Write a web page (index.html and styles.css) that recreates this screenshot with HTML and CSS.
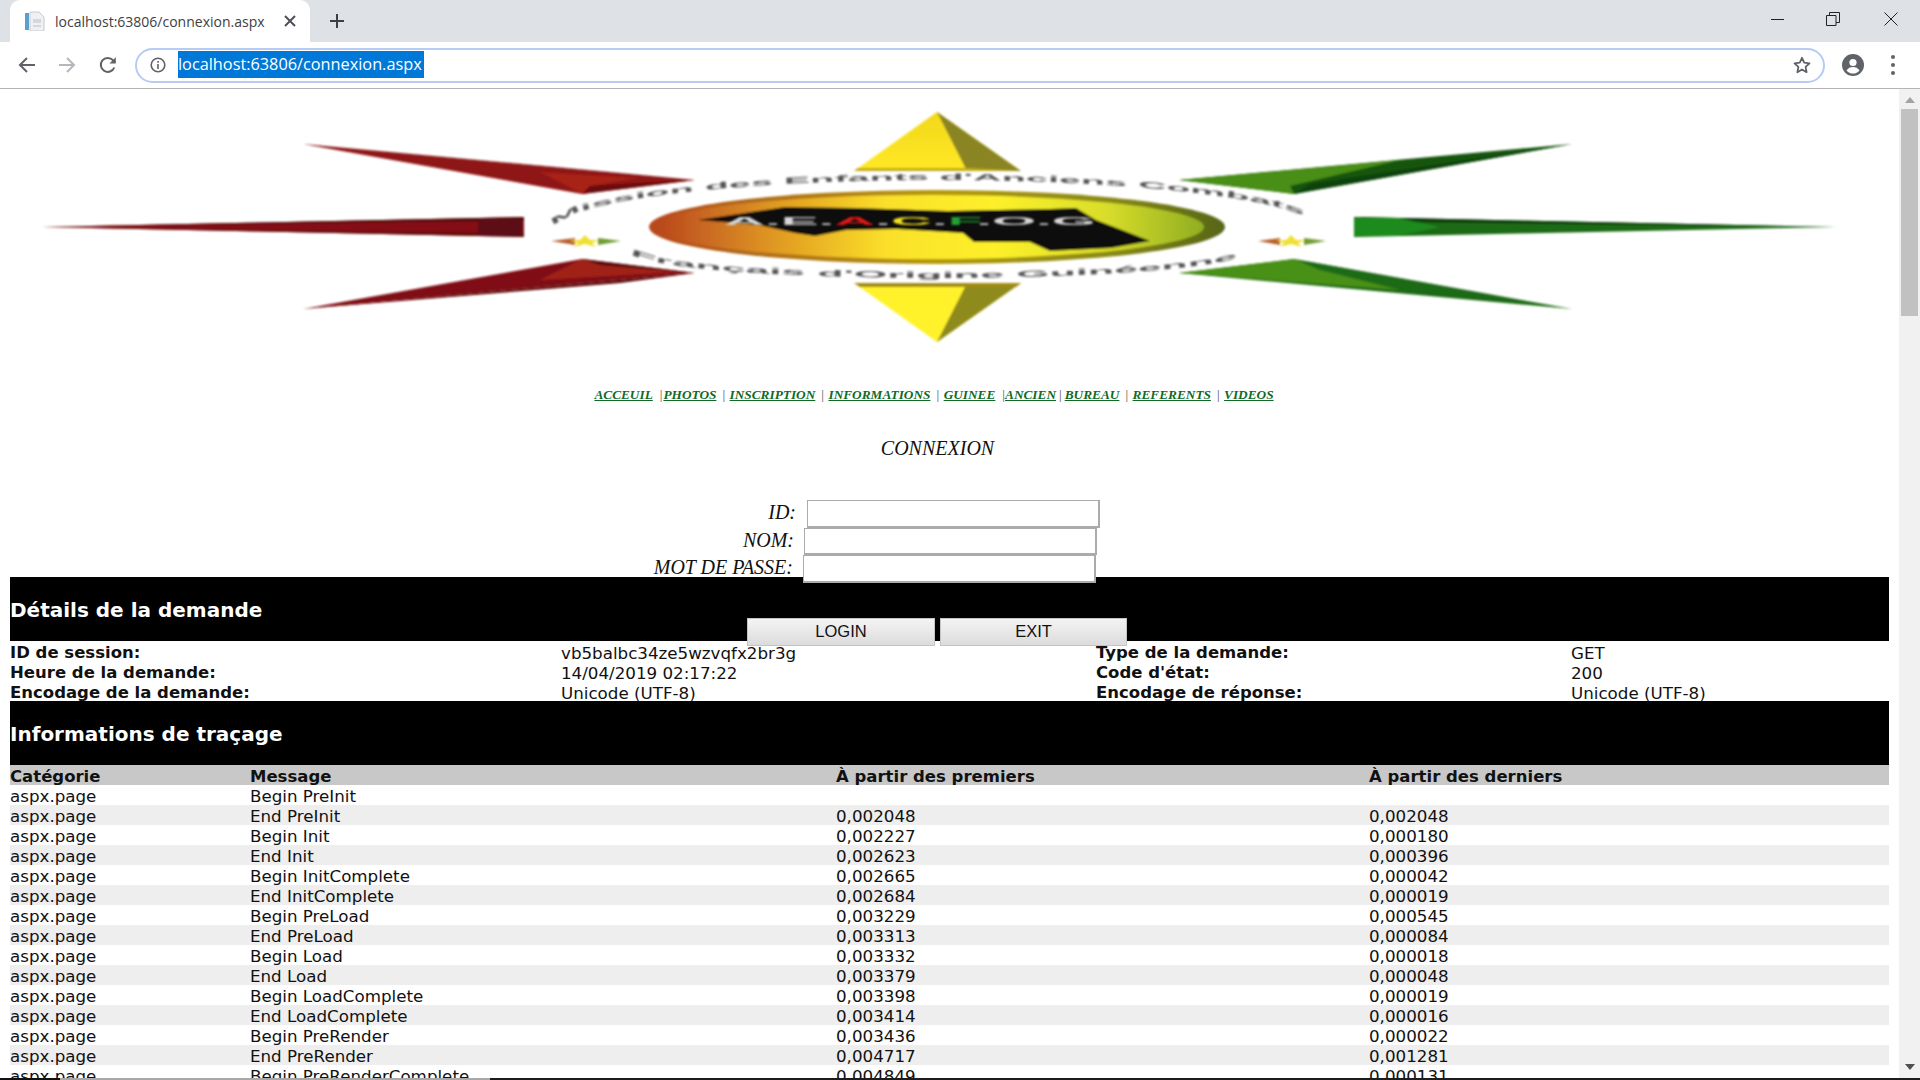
FILE: index.html
```html
<!DOCTYPE html>
<html lang="fr">
<head>
<meta charset="utf-8">
<title>localhost:63806/connexion.aspx</title>
<link rel="stylesheet" href="styles.css">
</head>
<body>
<header class="tabstrip">
  <div class="tab">
    <svg class="favicon" viewBox="0 0 20 20" aria-hidden="true">
      <rect x="0" y="2" width="4" height="17" fill="#5a9fd0"/>
      <path d="M5 1h9l5 5v14H5z" fill="#eef0f3" stroke="#c6cbd1"/>
      <path d="M8 8h8v4H8zM8 14h8v2H8z" fill="#d4d8dd"/>
    </svg>
    <span class="tab-title">localhost:63806/connexion.aspx</span>
    <svg class="tab-close" viewBox="0 0 12 12" aria-hidden="true"><path d="M1 1l10 10M11 1L1 11"/></svg>
  </div>
  <svg class="new-tab" viewBox="0 0 14 14" aria-hidden="true"><path d="M7 0v14M0 7h14"/></svg>
  <div class="window-controls">
    <svg class="win-min" viewBox="0 0 14 14" aria-hidden="true"><path d="M0 7.5h13"/></svg>
    <svg class="win-restore" viewBox="0 0 14 14" aria-hidden="true"><path d="M.5 3.5h9.500v10H.5zM3.500 3.500v-3h10v10h-3.500"/></svg>
    <svg class="win-close" viewBox="0 0 14 14" aria-hidden="true"><path d="M.5.5l13 13M13.500.5l-13 13"/></svg>
  </div>
</header>
<nav class="toolbar">
  <svg class="tool back" viewBox="0 0 18 18" aria-hidden="true"><path d="M17 9H2M9 2L2 9l7 7"/></svg>
  <svg class="tool forward" viewBox="0 0 18 18" aria-hidden="true"><path d="M1 9h15M9 2l7 7-7 7"/></svg>
  <svg class="tool reload" viewBox="0 0 18 18" aria-hidden="true"><path d="M15.300 11.500A7 7 0 1 1 14 4.200L16 6.200"/><path class="solid" d="M16.800 1.200v6.400h-6.400z"/></svg>
  <div class="omnibox">
    <svg class="info" viewBox="0 0 16 16" aria-hidden="true"><circle cx="8" cy="8" r="6.800"/><path d="M8 7v5M8 4v1.800"/></svg>
    <span class="url">localhost:63806/connexion.aspx</span>
    <svg class="star" viewBox="0 0 18 18" aria-hidden="true"><path d="M9 1.800l2.200 4.900 5.300.6-3.900 3.600 1 5.300L9 13.500l-4.600 2.700 1-5.300L1.500 7.300l5.300-.6z"/></svg>
  </div>
  <svg class="avatar" viewBox="0 0 22 22" aria-hidden="true"><circle cx="11" cy="11" r="11" fill="#5f6368"/><circle cx="11" cy="8.500" r="3.600" fill="#fff"/><path d="M4.500 16.500c1.500-2.600 4-3.600 6.500-3.600s5 1 6.500 3.600c-1.600 2-3.900 3.100-6.500 3.100s-4.900-1.100-6.500-3.100z" fill="#fff"/></svg>
  <div class="dots"><i></i><i></i><i></i></div>
</nav>
<div class="viewport">
  <main class="content">
    <div class="head">
      <svg class="logo" viewBox="0 89 1875 296" role="img" aria-label="Logo AEACFOG">
        <defs>
          <filter id="soft" x="-5%" y="-5%" width="110%" height="110%"><feGaussianBlur stdDeviation="1.2"/></filter>
          <filter id="softer" x="-5%" y="-20%" width="110%" height="140%"><feGaussianBlur stdDeviation="0.9"/></filter>
          <linearGradient id="ringG" x1="0" x2="1" y1="0" y2="0">
            <stop offset="0" stop-color="#b8481c"/><stop offset=".2" stop-color="#b0701a"/><stop offset=".5" stop-color="#b59a10"/><stop offset=".8" stop-color="#8a8a14"/><stop offset="1" stop-color="#56661a"/>
          </linearGradient>
          <linearGradient id="discG" x1="0" x2="1" y1="0" y2="0">
            <stop offset="0" stop-color="#b9461f"/><stop offset=".22" stop-color="#e09a22"/><stop offset=".42" stop-color="#fbe02a"/><stop offset=".62" stop-color="#fdf02c"/><stop offset=".82" stop-color="#d9de2a"/><stop offset="1" stop-color="#8fae22"/>
          </linearGradient>
          <linearGradient id="triTop" x1="0" x2="0" y1="0" y2="1">
            <stop offset="0" stop-color="#f2d81c"/><stop offset="1" stop-color="#ffe824"/>
          </linearGradient>
          <path id="arcTop" d="M556 229 A381 49 0 0 1 1318 229"/>
          <path id="arcBottom" d="M632 252 A306 26 0 0 0 1244 252"/>
        </defs>
        <g filter="url(#soft)">
          <!-- top triangle -->
          <path d="M937 112L854 171H1021z" fill="url(#triTop)"/>
          <path d="M937 112L1021 171H967z" fill="#8a8420"/>
          <path d="M858 168H967L1021 171H854z" fill="#c4ac18"/>
          <!-- bottom triangle -->
          <path d="M854 283H1021L937 342z" fill="#fff22c"/>
          <path d="M937 342L1021 283H967z" fill="#8f8a1c"/>
          <path d="M854 283H1021L1016 287H860z" fill="#a08c14"/>
          <!-- left rays -->
          <path d="M42 227L524 217V237z" fill="#841014"/>
          <path d="M42 227L524 217V221L400 222z" fill="#520809"/>
          <path d="M42 227L524 237V233L400 232z" fill="#620c0e"/>
          <path d="M478 219H522V236H478z" fill="#5c0f12"/>
          <path d="M303 144L695 180L582 194z" fill="#8f1214"/>
          <path d="M303 144L695 180L610 172z" fill="#480606"/>
          <path d="M582 194L695 180L590 186z" fill="#680e08"/>
          <path d="M540 172L640 178L590 186L582 194z" fill="#a82218"/>
          <path d="M303 309L695 273L582 259z" fill="#801012"/>
          <path d="M582 259L695 273L600 265z" fill="#520a08"/>
          <path d="M582 259L600 265L680 272L540 280z" fill="#a02016"/>
          <path d="M303 309L695 273L620 283z" fill="#5c0808"/>
          <!-- right rays -->
          <path d="M1836 227L1354 217V237z" fill="#1c6a12"/>
          <path d="M1836 227L1354 217L1400 222z" fill="#0f3c08"/>
          <path d="M1354 218H1398L1440 227L1398 236H1354z" fill="#1f8a1e"/>
          <path d="M1572 144L1179 180L1294 194z" fill="#14540c"/>
          <path d="M1179 180L1400 160L1290 186L1294 194z" fill="#4a8e18"/>
          <path d="M1294 194L1310 184L1572 144z" fill="#0f4208"/>
          <path d="M1572 309L1179 273L1294 259z" fill="#1c6a12"/>
          <path d="M1179 273L1294 259L1320 270L1400 290z" fill="#4a9018"/>
          <path d="M1294 259L1572 309L1320 264z" fill="#123c0a"/>
          <!-- medallion -->
          <ellipse cx="937" cy="227" rx="288" ry="37" fill="url(#ringG)"/>
          <ellipse cx="930" cy="227" rx="274" ry="32" fill="url(#discG)"/>
          <!-- map -->
          <path d="M698 220L772 209L785 207L856 208L948 211L1050 209L1076 208L1096 220L1122 230L1150 241L1111 248L1050 251L1030 242L974 242L963 233L897 229L846 230L815 236L795 233L759 225z" fill="#0e0c0c"/>
          <!-- stars -->
          <path d="M551 241L575 238V245z" fill="#b8602c"/>
          <path d="M585 235L590 240H600L592 243L596 247L585 244L574 247L578 243L570 240H580z" fill="#efe030"/>
          <path d="M598 238L621 241L598 245z" fill="#6f9c30"/>
          <path d="M1258 241L1280 238V245z" fill="#b8602c"/>
          <path d="M1291 235L1296 240H1306L1298 243L1302 247L1291 244L1280 247L1284 243L1276 240H1286z" fill="#efe030"/>
          <path d="M1304 238L1326 241L1304 245z" fill="#6f9c30"/>
        </g>
        <g filter="url(#softer)">
          <text class="logo-map-text" x="724" y="225" textLength="372" lengthAdjust="spacingAndGlyphs"><tspan>A.E.</tspan><tspan class="lr">A</tspan><tspan>.</tspan><tspan class="ly">C</tspan><tspan>.</tspan><tspan class="lg">F</tspan><tspan>.O.G</tspan></text>
          <text class="logo-ring"><textPath href="#arcTop" textLength="760" lengthAdjust="spacingAndGlyphs">Mission des Enfants d'Anciens Combats</textPath></text>
          <text class="logo-ring"><textPath href="#arcBottom" textLength="610" lengthAdjust="spacingAndGlyphs">Français d'Origine Guinéenne</textPath></text>
        </g>
      </svg>
      <div class="site-nav">
        <a href="#">ACCEUIL</a><span class="sep tight">|</span><a href="#">PHOTOS</a><span class="sep">|</span><a href="#">INSCRIPTION</a><span class="sep">|</span><a href="#">INFORMATIONS</a><span class="sep">|</span><a href="#">GUINEE</a><span class="sep closed">|</span><a href="#">ANCIEN</a><span class="sep near">|</span><a href="#">BUREAU</a><span class="sep">|</span><a href="#">REFERENTS</a><span class="sep">|</span><a href="#">VIDEOS</a>
      </div>
      <h1 class="page-title">CONNEXION</h1>
    </div>
    <form class="login">
      <div class="field field-id"><label>ID:</label><input type="text"></div>
      <div class="field field-nom"><label>NOM:</label><input type="text"></div>
      <div class="field field-pass"><label>MOT DE PASSE:</label><input type="password"></div>
      <div class="actions"><button type="button" class="btn-login">LOGIN</button><button type="button" class="btn-exit">EXIT</button></div>
    </form>
    <section class="trace">
      <h2>Détails de la demande</h2>
      <div class="details">
        <b>ID de session:</b><span>vb5balbc34ze5wzvqfx2br3g</span><b>Type de la demande:</b><span>GET</span>
        <b>Heure de la demande:</b><span>14/04/2019 02:17:22</span><b>Code d'état:</b><span>200</span>
        <b>Encodage de la demande:</b><span>Unicode (UTF-8)</span><b>Encodage de réponse:</b><span>Unicode (UTF-8)</span>
      </div>
      <h2>Informations de traçage</h2>
      <table>
        <colgroup><col class="c1"><col class="c2"><col class="c3"><col class="c4"></colgroup>
        <thead><tr><th>Catégorie</th><th>Message</th><th>À partir des premiers</th><th>À partir des derniers</th></tr></thead>
        <tbody>
          <tr><td>aspx.page</td><td>Begin PreInit</td><td></td><td></td></tr>
          <tr><td>aspx.page</td><td>End PreInit</td><td>0,002048</td><td>0,002048</td></tr>
          <tr><td>aspx.page</td><td>Begin Init</td><td>0,002227</td><td>0,000180</td></tr>
          <tr><td>aspx.page</td><td>End Init</td><td>0,002623</td><td>0,000396</td></tr>
          <tr><td>aspx.page</td><td>Begin InitComplete</td><td>0,002665</td><td>0,000042</td></tr>
          <tr><td>aspx.page</td><td>End InitComplete</td><td>0,002684</td><td>0,000019</td></tr>
          <tr><td>aspx.page</td><td>Begin PreLoad</td><td>0,003229</td><td>0,000545</td></tr>
          <tr><td>aspx.page</td><td>End PreLoad</td><td>0,003313</td><td>0,000084</td></tr>
          <tr><td>aspx.page</td><td>Begin Load</td><td>0,003332</td><td>0,000018</td></tr>
          <tr><td>aspx.page</td><td>End Load</td><td>0,003379</td><td>0,000048</td></tr>
          <tr><td>aspx.page</td><td>Begin LoadComplete</td><td>0,003398</td><td>0,000019</td></tr>
          <tr><td>aspx.page</td><td>End LoadComplete</td><td>0,003414</td><td>0,000016</td></tr>
          <tr><td>aspx.page</td><td>Begin PreRender</td><td>0,003436</td><td>0,000022</td></tr>
          <tr><td>aspx.page</td><td>End PreRender</td><td>0,004717</td><td>0,001281</td></tr>
          <tr><td>aspx.page</td><td>Begin PreRenderComplete</td><td>0,004849</td><td>0,000131</td></tr>
        </tbody>
      </table>
    </section>
  </main>
  <aside class="scrollbar" aria-hidden="true">
    <div class="arrow up"></div>
    <div class="thumb"></div>
    <div class="arrow down"></div>
  </aside>
</div>
<footer class="edge" aria-hidden="true"><i class="e1"></i><i class="e2"></i><i class="e3"></i></footer>
</body>
</html>
```

FILE: styles.css
```css
* { box-sizing: border-box; }
html, body { height: 100%; }
body {
  margin: 0;
  display: flex;
  flex-direction: column;
  height: 1080px;
  overflow: hidden;
  background: #fff;
  font-family: "DejaVu Sans", Verdana, sans-serif;
  color: #111;
}

/* browser chrome */
.tabstrip {
  flex: 0 0 42px;
  display: flex;
  align-items: stretch;
  background: #dee1e6;
  padding-left: 10px;
}
.tab {
  width: 300px;
  background: #fff;
  border-radius: 10px 10px 0 0;
  display: flex;
  align-items: center;
  padding-left: 15px;
  padding-right: 14px;
}
.favicon { width: 20px; height: 20px; flex: none; }
.tab-title {
  margin-left: 10px;
  flex: 1;
  font: 14px "Open Sans", sans-serif;
  color: #3c4043;
  white-space: nowrap;
}
.tab-close { width: 12px; height: 12px; flex: none; }
.tab-close path { stroke: #4d5156; stroke-width: 2; fill: none; }
.new-tab { width: 14px; height: 14px; margin: 14px 0 0 20px; flex: none; }
.new-tab path { stroke: #3c4043; stroke-width: 2; fill: none; }
.window-controls { margin-left: auto; display: flex; align-items: flex-start; padding: 12px 22px 0 0; }
.window-controls svg { width: 14px; height: 14px; flex: none; }
.window-controls path { stroke: #222; stroke-width: 1; fill: none; }
.win-restore { margin-left: 41px; }
.win-close { margin-left: 44px; }

.toolbar {
  flex: 0 0 47px;
  display: flex;
  align-items: center;
  background: #fff;
  border-bottom: 1px solid #b4b4b4;
  padding-left: 18px;
}
.tool { width: 18px; height: 18px; flex: none; }
.tool path { fill: none; stroke: #5f6368; stroke-width: 2; }
.tool path.solid { fill: #5f6368; stroke: none; }
.forward { margin-left: 22px; }
.forward path { stroke: #b4b7bb; }
.reload { margin-left: 23px; }
.omnibox {
  margin-left: 18px;
  width: 1690px;
  height: 35px;
  border: 2px solid #b6ccf4;
  border-radius: 18px;
  display: flex;
  align-items: center;
  padding-left: 13px;
  padding-right: 12px;
}
.info { width: 16px; height: 16px; flex: none; }
.info circle, .info path { fill: none; stroke: #5f6368; stroke-width: 1.6; }
.url {
  margin-left: 12px;
  margin-top: -2px;
  height: 27px;
  width: 246px;
  background: #0078d7;
  color: #fff;
  font: 16.3px/27px "Open Sans", sans-serif;
  white-space: nowrap;
}
.star { width: 18px; height: 18px; margin-left: auto; flex: none; }
.star path { fill: none; stroke: #5f6368; stroke-width: 1.8; stroke-linejoin: round; }
.avatar { width: 22px; height: 22px; margin-left: 17px; flex: none; }
.dots { margin-left: 27px; display: flex; flex-direction: column; gap: 4px; }
.dots i { display: block; width: 4px; height: 4px; border-radius: 50%; background: #5f6368; }

/* page viewport */
.viewport { flex: 1; min-height: 0; display: flex; }
.content { flex: 1; min-width: 0; overflow: hidden; }
.scrollbar {
  flex: 0 0 21px;
  background: #f1f1f1;
  display: flex;
  flex-direction: column;
  align-items: center;
}
.thumb { width: 17px; height: 207px; background: #c1c1c1; margin-top: 0; }
.arrow { flex: none; width: 0; height: 0; border-left: 5px solid transparent; border-right: 5px solid transparent; }
.arrow.up { border-bottom: 6px solid #a3a3a3; margin: 8px 0 6px; }
.arrow.down { border-top: 6px solid #505050; margin: auto 0 8px; }
.edge { flex: 0 0 2px; display: flex; }
.edge i { display: block; height: 2px; }
.e1 { width: 60px; background: #111; }
.e2 { width: 430px; background: #a8a8a8; }
.e3 { flex: 1; background: #1c1c1c; }

/* site header */
.head { width: 1875px; text-align: center; }
.logo { display: block; width: 1875px; height: 296px; }
.logo-ring { font: bold 9px "Liberation Sans", sans-serif; fill: #555; }
.logo-map-text { font: bold 10px "Liberation Sans", sans-serif; fill: #d6d6d6; }
.lr { fill: #e01818; }
.ly { fill: #f2e020; }
.lg { fill: #20a030; }

.site-nav {
  height: 20px;
  display: flex;
  justify-content: center;
  align-items: center;
  padding-right: 7px;
  font: italic bold 13.3px/20px "Liberation Serif", serif;
}
.site-nav a { color: #0f6a24; text-decoration: underline; }
.sep { font-weight: normal; font-style: normal; color: #555; margin: 0 4.5px 0 6px; }
.sep.tight { margin: 0 1px 0 7px; }
.sep.closed { margin: 0 0 0 7px; }
.sep.near { margin: 0 3px 0 3px; }

.page-title {
  margin: 31px 0 40px;
  font: italic 400 20px/24px "Liberation Serif", serif;
  color: #111;
}

/* login form: lies over the trace output that follows it */
.login { position: relative; z-index: 1; height: 77px; font: italic 20px/25px "Liberation Serif", serif; }
.field { display: flex; }
.field label { text-align: right; color: #111; }
.field input {
  display: block;
  width: 293px;
  background: #fff;
  border: 1px solid #ababab;
  border-bottom-width: 2px;
  border-right-width: 2px;
  padding: 0;
  margin: 0;
  border-radius: 0;
}
.field-id { height: 28px; }
.field-id label { width: 796px; margin-right: 11px; }
.field-nom { height: 27px; }
.field-nom label { width: 794px; margin-right: 10px; }
.field-pass { height: 28px; }
.field-pass label { width: 793px; margin-right: 10px; }
.field-id input, .field-nom input, .field-pass input { height: 100%; }
.actions { display: flex; margin-top: 35px; padding-left: 747px; gap: 5px; }
.actions button {
  height: 28px;
  background: linear-gradient(#f4f4f4, #dcdcdc);
  border: 1px solid #c4c4c4;
  border-radius: 0;
  padding: 0 0 2px;
  font: 16.5px "Liberation Sans", sans-serif;
  color: #111;
}
.btn-login { width: 188px; }
.btn-exit { width: 187px; }

/* trace output */
.trace { width: 1899px; padding: 0 10px; font-size: 16.7px; line-height: 16px; }
.trace h2 {
  margin: 0;
  height: 64px;
  background: #000;
  color: #fff;
  font-size: 20px;
  font-weight: 700;
  line-height: 66px;
}
.details {
  display: grid;
  grid-template-columns: 551px 535px 475px 1fr;
  grid-auto-rows: 20px;
}
.details > * { padding-top: 4px; }
.details b { font-weight: 700; font-size: 16.5px; }
.trace table { width: 1879px; table-layout: fixed; border-collapse: collapse; }
.c1 { width: 240px; }
.c2 { width: 586px; }
.c3 { width: 533px; }
.c4 { width: 520px; }
.trace th, .trace td { height: 20px; padding: 3px 0 0; text-align: left; white-space: nowrap; vertical-align: top; }
.trace th { background: #c8c8c8; font-weight: 700; font-size: 16.5px; padding-top: 4px; }
.trace tbody tr:nth-child(even) { background: #eee; }
```
